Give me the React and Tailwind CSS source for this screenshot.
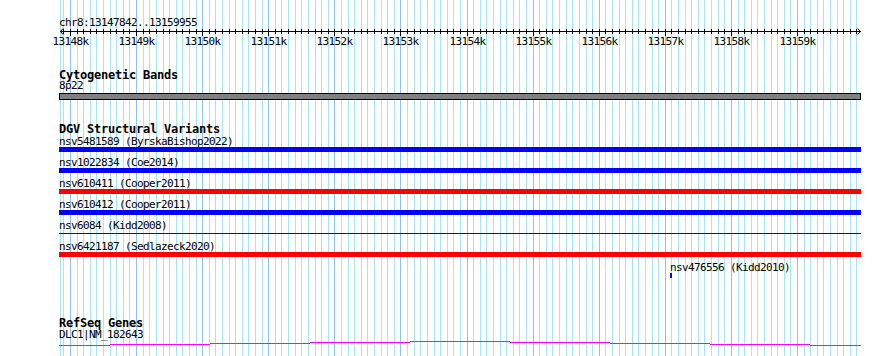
import React from 'react'

const LEFT = 59
const PX_PER_100BP = 6.6091

// grid / tick positions, one per 100bp starting at 13147900
const ticks = []
for (let n = -1; n <= 119; n++) {
  ticks.push({ x: Math.round(70 + n * PX_PER_100BP), major: n % 10 === 0 })
}
const kbLabels = ticks.filter(t => t.major).map((t, i) => ({ x: t.x, label: `${13148 + i}k` }))

const variants = [
  { id: 'nsv5481589', study: 'ByrskaBishop2022', color: 'bg-[#0000ff]' },
  { id: 'nsv1022834', study: 'Coe2014', color: 'bg-[#0000ff]' },
  { id: 'nsv610411', study: 'Cooper2011', color: 'bg-[#ff0000]' },
  { id: 'nsv610412', study: 'Cooper2011', color: 'bg-[#0000ff]' },
  { id: 'nsv6084', study: 'Kidd2008', thin: true },
  { id: 'nsv6421187', study: 'Sedlazeck2020', color: 'bg-[#ff0000]' },
]

// intron line of DLC1, drawn pixel row by pixel row
const geneSegments = [
  [59, 110, 345], [110, 210, 344], [210, 310, 343], [310, 410, 342], [410, 510, 341],
  [510, 610, 342], [610, 710, 343], [710, 810, 344], [810, 861, 345],
]

const Grid = () => (
  <svg className="absolute inset-0" width="890" height="356">
    <rect x="60" y="0" width="1" height="356" fill="#a8e6ee" />
    {ticks.map((t, i) => (
      <rect key={i} x={t.x} y="0" width="1" height="356" fill={t.major ? '#8ec4ea' : '#a8e6ee'} />
    ))}
  </svg>
)

const Axis = () => (
  <svg width="802" height="20" className="block overflow-visible">
    <rect x="1" y="4" width="801" height="1" fill="#000" />
    {ticks.map((t, i) => (
      <rect key={i} x={t.x - LEFT} y="2" width="1" height={t.major ? 7 : 5} fill="#000" />
    ))}
    <polyline points="4,1.5 1.5,4.5 4,7.5" fill="none" stroke="#000" strokeWidth="1" />
    <polyline points="798.5,1.5 801.5,4.5 798.5,7.5" fill="none" stroke="#000" strokeWidth="1" />
    {kbLabels.map(l => (
      <text
        key={l.label}
        x={l.x - LEFT + 0.5}
        y="18"
        textAnchor="middle"
        fontSize="11"
        letterSpacing="-0.62"
        fontFamily="'DejaVu Sans Mono', monospace"
        fill="#000"
      >
        {l.label}
      </text>
    ))}
  </svg>
)

const Label = ({ children, className = '' }) => (
  <div className={`h-[11px] text-[11px] leading-[11px] tracking-[-0.62px] whitespace-pre ${className}`}>{children}</div>
)

const Title = ({ children, className = '' }) => (
  <div className={`h-[12px] text-[12px] leading-[12px] tracking-[-0.22px] font-bold whitespace-pre ${className}`}>{children}</div>
)

export default function App() {
  return (
    <div className="relative w-[890px] h-[356px] overflow-hidden bg-white text-black font-['DejaVu_Sans_Mono','Liberation_Mono',monospace]">
      <Grid />

      <div className="relative ml-[59px] w-[802px] flex flex-col">
        <Label className="mt-[17px] !h-[10px]">chr8:13147842..13159955</Label>
        <Axis />

        <Title className="mt-[22px] !h-[11px]">Cytogenetic Bands</Title>
        <Label className="!h-[13px]">8p22</Label>
        <div className="h-[7px] border border-black bg-[#808080]" />

        <Title className="mt-[23px]">DGV Structural Variants</Title>
        <div className="mt-px flex flex-col">
          {variants.map(v => (
            <div key={v.id} className="mb-[5px] flex flex-col">
              <Label>{`${v.id} (${v.study})`}</Label>
              {v.thin ? (
                <div className="h-[5px] flex items-center">
                  <div className="h-px w-full bg-[#0000ff]" />
                </div>
              ) : (
                <div className={`h-[5px] ${v.color}`} />
              )}
            </div>
          ))}
          <div className="ml-[611px] flex flex-col">
            <Label>nsv476556 (Kidd2010)</Label>
            <div className="h-[5px] w-[2px] bg-[#0000ff]" />
          </div>
        </div>

        <Title className="mt-[39px]">RefSeq Genes</Title>
        <Label className="!h-[10px]">DLC1|NM_182643</Label>
        <svg width="802" height="17" className="block">
          {geneSegments.map(([a, b, y], i) => (
            <rect key={i} x={a - LEFT} y={y - 339} width={b - a} height="1" fill="#ff00ff" />
          ))}
        </svg>
      </div>
    </div>
  )
}
